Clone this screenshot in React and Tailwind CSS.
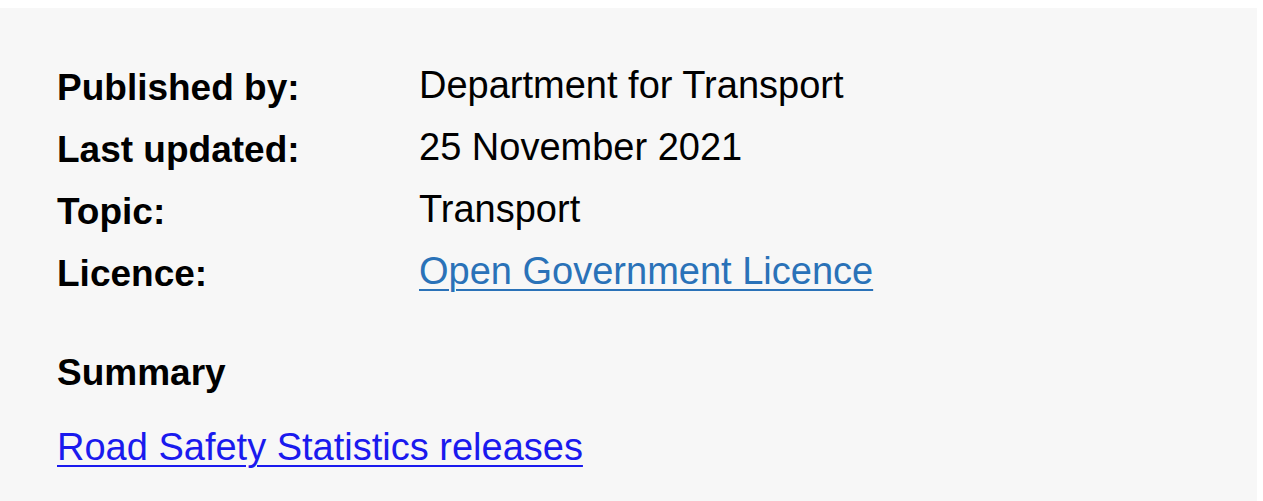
import React from 'react';

const rows = [
  { label: 'Published by:', value: 'Department for Transport' },
  { label: 'Last updated:', value: '25 November 2021' },
  { label: 'Topic:', value: 'Transport' },
  { label: 'Licence:', value: 'Open Government Licence', link: true },
];

export default function App() {
  return (
    <div className="min-h-[501px] bg-white pt-[8px] font-['Liberation_Sans',Arial,sans-serif] text-black">
      <div className="w-[1257px] h-[493px] bg-[#f7f7f7] pl-[57px] pt-[49px]">
        <dl className="grid grid-cols-[362px_1fr]">
          {rows.map((r) => (
            <React.Fragment key={r.label}>
              <dt className="text-[37px] leading-[62px] font-bold">{r.label}</dt>
              <dd className="text-[38px] leading-[56px]">
                {r.link ? (
                  <a href="#" className="text-[#2a72b8] underline decoration-2 underline-offset-[5px]">
                    {r.value}
                  </a>
                ) : (
                  r.value
                )}
              </dd>
            </React.Fragment>
          ))}
        </dl>
        <h2 className="mt-[43px] text-[37px] leading-[50px] font-bold">Summary</h2>
        <p className="mt-[24px] text-[38px] leading-[50px]">
          <a href="#" className="text-[#1a1aee] underline decoration-2 underline-offset-[5px]">
            Road Safety Statistics releases
          </a>
        </p>
      </div>
    </div>
  );
}
